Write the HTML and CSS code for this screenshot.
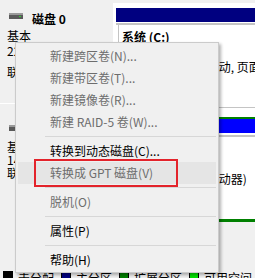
FILE: index.html
```html
<!DOCTYPE html>
<html lang="zh-CN">
<head>
    <meta charset="UTF-8">
    <title>磁盘管理</title>
    <link rel="stylesheet" href="styles.css">
</head>
<body>
    <div class="disks">
        <div class="disk disk-0">
            <div class="disk-label">
                <div class="disk-title">
                    <svg class="disk-icon" width="14" height="6" viewBox="0 0 14 6">
                        <rect x="0" y="0" width="14" height="6" fill="#5a5a5a"/>
                        <rect x="0" y="0" width="14" height="2" fill="#9a9a9a"/>
                        <rect x="10" y="3" width="2" height="1" fill="#2fd02f"/>
                    </svg>
                    <span>磁盘 0</span>
                </div>
                <div class="disk-line first">基本</div>
                <div class="disk-line">223.57 GB</div>
                <div class="disk-line status">联机</div>
            </div>
            <div class="disk-parts">
                <div class="part">
                    <div class="part-head primary"></div>
                    <div class="part-body">
                        <div class="part-inner">
                            <div class="part-name">系统 (C:)</div>
                            <div>223.57 GB NTFS</div>
                            <div>状态良好 (系统, 启动, 页面文件, 活动, 故障转储, 主分区)</div>
                        </div>
                    </div>
                </div>
            </div>
        </div>

        <div class="disk disk-1">
            <div class="disk-label">
                <div class="disk-title">
                    <svg class="disk-icon" width="14" height="6" viewBox="0 0 14 6">
                        <rect x="0" y="0" width="14" height="6" fill="#5a5a5a"/>
                        <rect x="0" y="0" width="14" height="2" fill="#9a9a9a"/>
                        <rect x="10" y="3" width="2" height="1" fill="#2fd02f"/>
                    </svg>
                    <span>磁盘 1</span>
                </div>
                <div class="disk-line first">基本</div>
                <div class="disk-line">14.91 GB</div>
                <div class="disk-line status">联机</div>
            </div>
            <div class="disk-parts">
                <div class="extended">
                    <div class="part-head logical"></div>
                    <div class="part-body">
                        <div class="part-inner">
                            <div class="part-name">新加卷 (D:)</div>
                            <div>14.91 GB NTFS</div>
                            <div>状态良好 (逻辑驱动器)</div>
                        </div>
                    </div>
                </div>
            </div>
        </div>
    </div>

    <div class="legend">
        <div class="legend-item"><span class="swatch unallocated"></span>未分配</div>
        <div class="legend-item"><span class="swatch primary"></span>主分区</div>
        <div class="legend-item"><span class="swatch ext"></span>扩展分区</div>
        <div class="legend-item"><span class="swatch free"></span>可用空间</div>
    </div>

    <!-- context menu over the disk list -->
    <div class="menu">
        <div class="menu-item disabled">新建跨区卷(N)...</div>
        <div class="menu-item disabled">新建带区卷(T)...</div>
        <div class="menu-item disabled">新建镜像卷(R)...</div>
        <div class="menu-item disabled">新建 RAID-5 卷(W)...</div>
        <div class="menu-sep"></div>
        <div class="menu-item">转换到动态磁盘(C)...</div>
        <div class="menu-item disabled hover">转换成 GPT 磁盘(V)</div>
        <div class="menu-sep"></div>
        <div class="menu-item disabled">脱机(O)</div>
        <div class="menu-sep"></div>
        <div class="menu-item">属性(P)</div>
        <div class="menu-sep"></div>
        <div class="menu-item">帮助(H)</div>
    </div>

    <div class="mark"></div>
</body>
</html>
```

FILE: styles.css
```css
body {
    margin: 0;
    width: 255px;
    height: 278px;
    overflow: hidden;
    background-color: #f0f0f0;
    font-family: "Noto Sans CJK SC", "Noto Sans", sans-serif;
    font-size: 12px;
    color: #000;
    position: relative;
}
.disks {
    padding-top: 3px;
}
.disk {
    display: flex;
}
.disk-0 {
    height: 105px;
}
.disk-1 {
    height: 114px;
}
.disk-label {
    width: 113px;
    flex-shrink: 0;
    box-sizing: border-box;
    padding: 8px 0 0 7px;
    white-space: nowrap;
}
.disk-0 .disk-label {
    height: 101px;
    border-bottom: 1px solid #fff;
}
.disk-1 .disk-label {
    margin-top: 7px;
}
.disk-title {
    display: flex;
    height: 15px;
    line-height: 15px;
    font-weight: bold;
}
.disk-icon {
    margin: 2px 9px 0 2px;
}
.disk-line {
    line-height: 15px;
}
.disk-0 .disk-line.first {
    margin-top: 2px;
}
.disk-0 .disk-line.status {
    margin-top: 6px;
}
.disk-1 .disk-line {
    line-height: 13px;
}
.disk-1 .disk-line.first {
    margin-top: 2px;
}
.disk-parts {
    flex: 1;
    min-width: 0;
    background-color: #fff;
    padding-left: 3px;
    box-sizing: border-box;
    white-space: nowrap;
}
.disk-0 .disk-parts {
    padding-top: 5px;
    border-bottom: 1px solid #c4c4c4;
}
.disk-1 .disk-parts {
    padding-top: 9px;
}
.part-head {
    height: 14px;
}
.part-head.primary {
    background-color: #000080;
}
.part-head.logical {
    background-color: #0000ff;
}
.part-body {
    margin-top: 1px;
    border-top: 2px solid #c4c4c4;
}
.extended .part-body {
    margin-top: 2px;
}
.part-inner {
    margin-left: 2px;
    border-left: 1px solid #c4c4c4;
    padding: 4px 0 0 3px;
    line-height: 15px;
    overflow: hidden;
}
.extended {
    height: 105px;
    box-sizing: border-box;
    border: 2px solid #008000;
    border-bottom-width: 3px;
    border-right: none;
}
.extended .part-inner {
    margin-left: 4px;
    padding-left: 5px;
    height: 80px;
}
.part-name {
    font-weight: bold;
}

.legend {
    display: flex;
    margin-top: 49px;
    padding-left: 3px;
    line-height: 14px;
}
.legend-item {
    display: flex;
    margin-right: 7px;
    white-space: nowrap;
}
.swatch {
    width: 10px;
    height: 10px;
    box-sizing: border-box;
    border: 1px solid #000;
    margin-right: 5px;
}
.swatch.unallocated { background-color: #000; }
.swatch.primary { background-color: #000080; }
.swatch.ext { background-color: #008000; }
.swatch.free { background-color: #00e000; }

.menu {
    position: absolute;
    left: 15px;
    top: 42px;
    width: 204px;
    box-sizing: border-box;
    padding: 2px 0 1px;
    background-color: #f0f0f0;
    border: 1px solid #cbcbcb;
    box-shadow: 2px 2px 3px rgba(0, 0, 0, 0.3);
}
.menu-item {
    height: 22px;
    line-height: 22px;
    margin: 0 2px;
    padding-left: 32px;
    white-space: nowrap;
}
.menu-item.disabled {
    color: #6d6d6d;
}
.menu-item.hover {
    background-color: #e5e5e5;
}
.menu-sep {
    height: 1px;
    margin: 3px 2px 3px 29px;
    background-color: #d7d7d7;
}
.mark {
    position: absolute;
    left: 34px;
    top: 159px;
    width: 144px;
    height: 28px;
    box-sizing: border-box;
    border: 2px solid #e3232b;
}
```
